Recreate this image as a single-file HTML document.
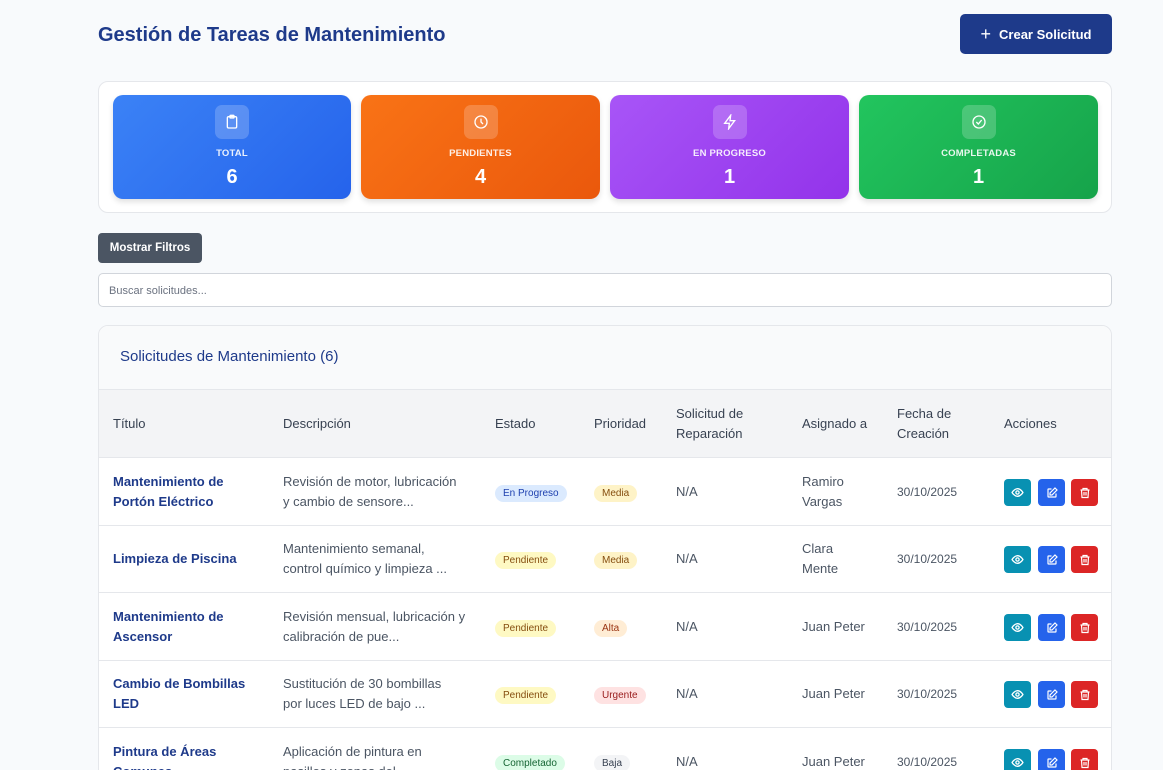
<!DOCTYPE html>
<html><head><meta charset="utf-8"><style>
*{box-sizing:border-box;margin:0;padding:0}
html{width:1163px;height:770px;overflow:hidden}
body{width:1163px;height:770px;overflow:hidden;background:#f8fafc;font-family:"Liberation Sans",sans-serif;position:relative;color:#374151}
.a{position:absolute}
h1{position:absolute;left:98px;top:24px;font-size:20px;font-weight:bold;color:#1e3a8a}
.btn{left:960px;top:14px;width:152px;height:40px;background:#1e3a8a;border-radius:5px;color:#fff;font-weight:bold;font-size:13px;display:flex;align-items:center;justify-content:center;gap:8px}
.stats{left:98px;top:81px;width:1014px;height:132px;background:#fff;border:1px solid #e5e7eb;border-radius:10px}
.card{top:95px;height:104px;border-radius:10px;color:#fff;text-align:center;box-shadow:0 3px 6px rgba(0,0,0,.12)}
.ic{width:34px;height:34px;margin:10px auto 0;background:rgba(255,255,255,.2);border-radius:7px;display:flex;align-items:center;justify-content:center}
.lb{font-size:9.5px;font-weight:bold;margin-top:9px;letter-spacing:.2px;opacity:.9}
.nm{font-size:20px;font-weight:bold;margin-top:7px}
.filt{left:98px;top:233px;width:104px;height:30px;background:#4b5563;color:#fff;border-radius:4px;font-size:11.5px;font-weight:bold;display:flex;align-items:center;justify-content:center}
.search{left:98px;top:273px;width:1014px;height:34px;background:#fff;border:1px solid #d1d5db;border-radius:5px;font-size:11px;color:#6b7280;padding:11px 10px}
.tbl{left:98px;top:325px;width:1014px;height:460px;background:#fff;border:1px solid #e5e7eb;border-radius:10px;overflow:hidden}
.th{left:0;top:0;width:1014px;height:64px;background:#f9fafb;border-bottom:1px solid #e5e7eb}
.th span{position:absolute;left:21px;top:22px;font-size:15px;color:#1e3a8a}
.hd{left:0;top:64px;width:1014px;height:68px;background:#f3f4f6;border-bottom:1px solid #e5e7eb;font-size:13px;color:#374151}
.hd div,.row div{position:absolute;line-height:20px}
.row{left:0;width:1014px;height:68px;border-bottom:1px solid #e5e7eb;font-size:13px}
.t{color:#1e3a8a;font-weight:bold}
.d{color:#4b5563}
.bd{font-size:10px;padding:0 8px;border-radius:9px;line-height:17px!important;height:17px}
.ab{width:27px;height:27px;border-radius:4px;display:flex;align-items:center;justify-content:center}
</style></head><body>
<h1>Gestión de Tareas de Mantenimiento</h1>
<div class="a btn"><span style="font-size:18px;font-weight:normal">+</span>Crear Solicitud</div>
<div class="a stats"></div>
<div class="a card" style="left:113px;width:238px;background:linear-gradient(135deg,#3b82f6,#2563eb)"><div class="ic"><svg width="16" height="16" viewBox="0 0 24 24" fill="none" stroke="#fff" stroke-width="2"><rect x="5" y="4" width="14" height="17" rx="2"/><rect x="9" y="2" width="6" height="4" rx="1"/></svg></div><div class="lb">TOTAL</div><div class="nm">6</div></div>
<div class="a card" style="left:361px;width:239px;background:linear-gradient(135deg,#f97316,#ea580c)"><div class="ic"><svg width="16" height="16" viewBox="0 0 24 24" fill="none" stroke="#fff" stroke-width="2"><circle cx="12" cy="12" r="9"/><path d="M12 7v5l3 3"/></svg></div><div class="lb">PENDIENTES</div><div class="nm">4</div></div>
<div class="a card" style="left:610px;width:239px;background:linear-gradient(135deg,#a855f7,#9333ea)"><div class="ic"><svg width="16" height="16" viewBox="0 0 24 24" fill="none" stroke="#fff" stroke-width="2"><path d="M13 2L4 14h7l-1 8 9-12h-7z"/></svg></div><div class="lb">EN PROGRESO</div><div class="nm">1</div></div>
<div class="a card" style="left:859px;width:239px;background:linear-gradient(135deg,#22c55e,#16a34a)"><div class="ic"><svg width="16" height="16" viewBox="0 0 24 24" fill="none" stroke="#fff" stroke-width="2"><circle cx="12" cy="12" r="9"/><path d="M8 12l3 3 5-6"/></svg></div><div class="lb">COMPLETADAS</div><div class="nm">1</div></div>
<div class="a filt">Mostrar Filtros</div>
<div class="a search">Buscar solicitudes...</div>
<div class="a tbl">
<div class="a th"><span>Solicitudes de Mantenimiento (6)</span></div>
<div class="a hd">
<div style="left:14px;top:24px">Título</div><div style="left:184px;top:24px">Descripción</div><div style="left:396px;top:24px">Estado</div><div style="left:495px;top:24px">Prioridad</div><div style="left:577px;top:14px">Solicitud de<br>Reparación</div><div style="left:703px;top:24px">Asignado a</div><div style="left:798px;top:14px">Fecha de<br>Creación</div><div style="left:905px;top:24px">Acciones</div>
</div>
<div id="rows"></div>
</div>
<script>
const R=[["Mantenimiento de<br>Portón Eléctrico","Revisión de motor, lubricación<br>y cambio de sensore...","En Progreso","#dbeafe","#1e40af","Media","#fef3c7","#854d0e","Ramiro<br>Vargas"],
["Limpieza de Piscina","Mantenimiento semanal,<br>control químico y limpieza ...","Pendiente","#fef9c3","#854d0e","Media","#fef3c7","#854d0e","Clara<br>Mente"],
["Mantenimiento de<br>Ascensor","Revisión mensual, lubricación y<br>calibración de pue...","Pendiente","#fef9c3","#854d0e","Alta","#ffedd5","#9a3412","Juan Peter"],
["Cambio de Bombillas<br>LED","Sustitución de 30 bombillas<br>por luces LED de bajo ...","Pendiente","#fef9c3","#854d0e","Urgente","#fee2e2","#991b1b","Juan Peter"],
["Pintura de Áreas<br>Comunes","Aplicación de pintura en<br>pasillos y zonas del...","Completado","#dcfce7","#166534","Baja","#f3f4f6","#374151","Juan Peter"]];
let h="",tops=[132,199,267,334,402];
R.forEach((r,i)=>{const one=!r[0].includes("<br>");const a1=!r[8].includes("<br>");
h+=`<div class="a row" style="top:${tops[i]}px">
<div class="t" style="left:14px;top:${one?24:14}px">${r[0]}</div>
<div class="d" style="left:184px;top:14px">${r[1]}</div>
<div class="bd" style="left:396px;top:27px;background:${r[3]};color:${r[4]}">${r[2]}</div>
<div class="bd" style="left:495px;top:27px;background:${r[6]};color:${r[7]}">${r[5]}</div>
<div class="d" style="left:577px;top:24px">N/A</div>
<div class="d" style="left:703px;top:${a1?24:14}px">${r[8]}</div>
<div class="d" style="left:798px;top:24px;font-size:12px">30/10/2025</div>
<div class="ab" style="left:905px;top:21px;background:#0891b2"><svg width="13" height="13" viewBox="0 0 24 24" fill="none" stroke="#fff" stroke-width="2.4"><path d="M2 12s4-7 10-7 10 7 10 7-4 7-10 7S2 12 2 12z"/><circle cx="12" cy="12" r="3"/></svg></div>
<div class="ab" style="left:939px;top:21px;background:#2563eb"><svg width="12" height="12" viewBox="0 0 24 24" fill="none" stroke="#fff" stroke-width="2.4"><path d="M11 4H5a1 1 0 0 0-1 1v14a1 1 0 0 0 1 1h14a1 1 0 0 0 1-1v-6"/><path d="M18 2l4 4-10 10H8v-4z"/></svg></div>
<div class="ab" style="left:972px;top:21px;background:#dc2626"><svg width="12" height="12" viewBox="0 0 24 24" fill="none" stroke="#fff" stroke-width="2.4"><path d="M3 6h18M8 6V3h8v3M5 6l1 15h12l1-15M10 10v7M14 10v7"/></svg></div>
</div>`});
document.getElementById("rows").innerHTML=h;
</script>
</body></html>
